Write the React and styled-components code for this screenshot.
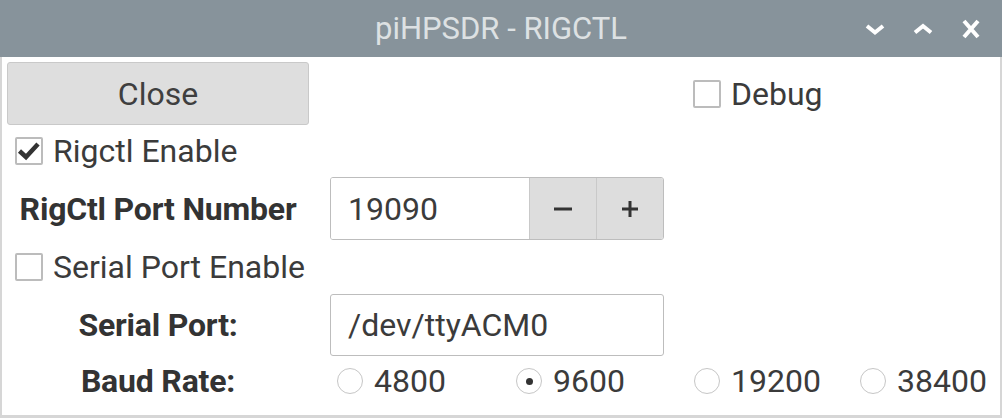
import React from "react"
import styled, { createGlobalStyle } from "styled-components"

const Global = createGlobalStyle`
  html, body {
    margin: 0;
    padding: 0;
    background: #ffffff;
  }
  body {
    font-family: Roboto, "Noto Sans", "Liberation Sans", sans-serif;
    color: #3b3b3b;
  }
`

const Window = styled.div`
  width: 1002px;
  height: 418px;
  box-sizing: border-box;
  display: flex;
  flex-direction: column;
  background: #ffffff;
  border-left: 2px solid #d6d6d6;
  border-right: 2px solid #d6d6d6;
  border-bottom: 3px solid #d6d6d6;
`

const TitleBar = styled.div`
  height: 57px;
  margin: 0 -2px;
  background: #87939b;
  color: #dde1e3;
  font-size: 31px;
  display: flex;
  align-items: center;
  justify-content: center;
  position: relative;
`

const TitleButtons = styled.div`
  position: absolute;
  right: 18px;
  top: 0;
  height: 57px;
  display: flex;
  align-items: center;
  gap: 22px;
`

const Body = styled.div`
  flex: 1;
  display: grid;
  grid-template-columns: 323px 178px 178px 166px 1fr;
  grid-template-rows: 63px 40px 63px 42px 62px 38px;
  row-gap: 6px;
  padding: 5px 0 0 5px;
  font-size: 32px;
`

const Cell = styled.div`
  grid-column: ${(p) => p.col} / span ${(p) => p.span || 1};
  grid-row: ${(p) => p.row};
  display: flex;
  align-items: center;
  padding-left: ${(p) => p.pad || 0}px;
  min-width: 0;
  white-space: nowrap;
`

const Button = styled.div`
  width: 302px;
  height: 63px;
  box-sizing: border-box;
  background: #dedede;
  border: 1px solid #c9c9c9;
  border-radius: 3px;
  display: flex;
  align-items: center;
  justify-content: center;
  color: #3f3f3f;
`

const Label = styled.div`
  width: 302px;
  text-align: center;
  font-weight: 700;
  font-size: 32px;
  letter-spacing: -0.2px;
  color: #333333;
`

const Box = styled.span`
  width: 28px;
  height: 28px;
  box-sizing: border-box;
  border: 2px solid #bcbcbc;
  border-radius: 2px;
  display: inline-flex;
  align-items: center;
  justify-content: center;
  margin-right: 10px;
  flex-shrink: 0;
`

const Radio = styled.span`
  width: 26px;
  height: 26px;
  box-sizing: border-box;
  border: 1.5px solid #c6c6c6;
  border-radius: 50%;
  display: inline-flex;
  align-items: center;
  justify-content: center;
  margin-right: 11px;
  flex-shrink: 0;

  &::after {
    content: "";
    width: 7px;
    height: 7px;
    border-radius: 50%;
    background: ${(p) => (p.checked ? "#333" : "transparent")};
  }
`

const Spin = styled.div`
  width: 334px;
  height: 63px;
  box-sizing: border-box;
  border: 1.5px solid #bdbdbd;
  border-radius: 3px;
  display: flex;
  overflow: hidden;
`

const Entry = styled.div`
  flex: 1;
  display: flex;
  align-items: center;
  padding-left: 17px;
  background: #fff;
  color: #3b3b3b;
`

const SpinButton = styled.div`
  width: 66px;
  background: #dddddd;
  border-left: 1.5px solid #c9c9c9;
  display: flex;
  align-items: center;
  justify-content: center;
`

const TextField = styled.div`
  width: 334px;
  height: 62px;
  box-sizing: border-box;
  border: 1.5px solid #bdbdbd;
  border-radius: 3px;
  display: flex;
  align-items: center;
  padding-left: 17px;
`

const Check = ({ on, children }) => (
  <>
    <Box>
      {on && (
        <svg width="24" height="22" viewBox="0 0 24 22">
          <path d="M2.5 11 L9 17 L21 4" fill="none" stroke="#333" strokeWidth="4.5" />
        </svg>
      )}
    </Box>
    {children}
  </>
)

const TitleIcon = ({ d }) => (
  <svg width="26" height="22" viewBox="0 0 26 22">
    <path d={d} fill="none" stroke="#ffffff" strokeWidth="4" />
  </svg>
)

export default function App() {
  return (
    <Window>
      <Global />
      <TitleBar>
        piHPSDR - RIGCTL
        <TitleButtons>
          <TitleIcon d="M5 8 L13 14.5 L21 8" />
          <TitleIcon d="M5 14.5 L13 8 L21 14.5" />
          <TitleIcon d="M6 3 L20 19 M20 3 L6 19" />
        </TitleButtons>
      </TitleBar>
      <Body>
        <Cell col={1} row={1}>
          <Button>Close</Button>
        </Cell>
        <Cell col={4} row={1} pad={7}>
          <Check>Debug</Check>
        </Cell>

        <Cell col={1} row={2} pad={8}>
          <Check on>Rigctl Enable</Check>
        </Cell>

        <Cell col={1} row={3}>
          <Label>RigCtl Port Number</Label>
        </Cell>
        <Cell col={2} span={2} row={3}>
          <Spin>
            <Entry>19090</Entry>
            <SpinButton>
              <svg width="20" height="20" viewBox="0 0 20 20">
                <path d="M1 10 H19" stroke="#333" strokeWidth="3" />
              </svg>
            </SpinButton>
            <SpinButton>
              <svg width="20" height="20" viewBox="0 0 20 20">
                <path d="M2 10 H18 M10 2 V18" stroke="#333" strokeWidth="3" />
              </svg>
            </SpinButton>
          </Spin>
        </Cell>

        <Cell col={1} row={4} pad={8}>
          <Check>Serial Port Enable</Check>
        </Cell>

        <Cell col={1} row={5}>
          <Label>Serial Port:</Label>
        </Cell>
        <Cell col={2} span={2} row={5}>
          <TextField>/dev/ttyACM0</TextField>
        </Cell>

        <Cell col={1} row={6}>
          <Label>Baud Rate:</Label>
        </Cell>
        <Cell col={2} row={6} pad={7}>
          <Radio />4800
        </Cell>
        <Cell col={3} row={6} pad={8}>
          <Radio checked />9600
        </Cell>
        <Cell col={4} row={6} pad={8}>
          <Radio />19200
        </Cell>
        <Cell col={5} row={6} pad={8}>
          <Radio />38400
        </Cell>
      </Body>
    </Window>
  )
}
